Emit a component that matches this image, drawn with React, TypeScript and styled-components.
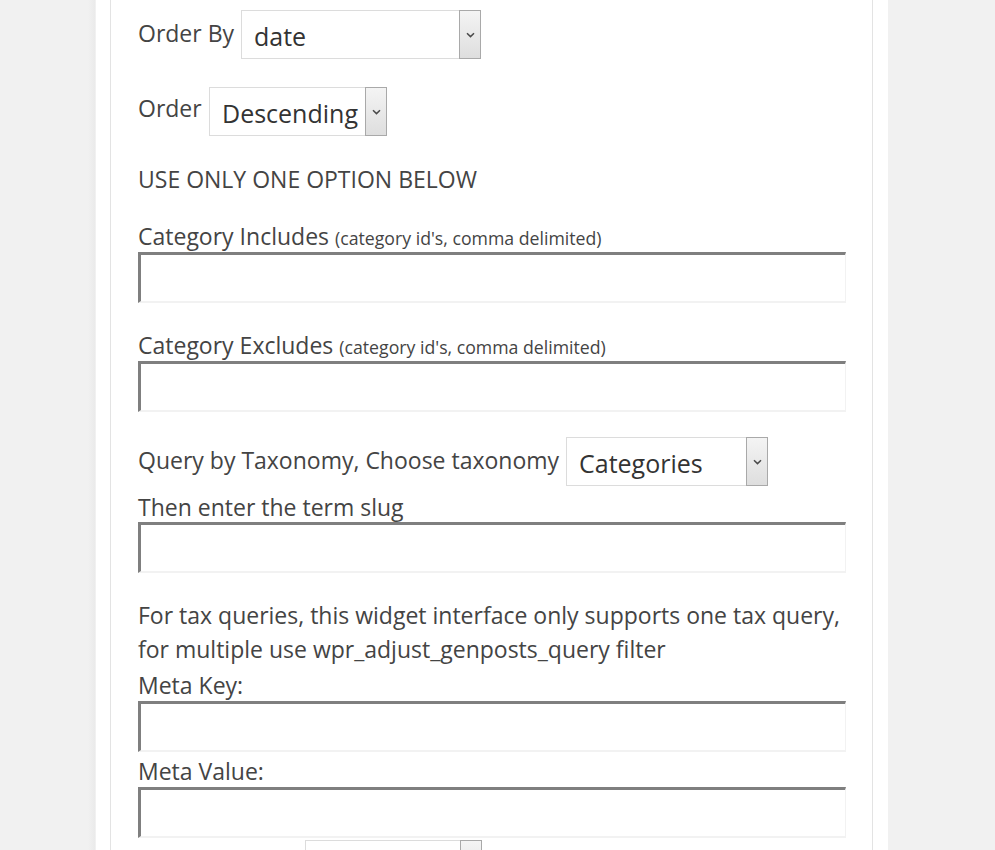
import React from "react";
import styled, { createGlobalStyle } from "styled-components";

const Global = createGlobalStyle`
  html, body { margin: 0; padding: 0; }
  body {
    background: #f1f1f1;
    font-family: "Open Sans", "Liberation Sans", sans-serif;
    color: #444;
    overflow: hidden;
  }
`;

const Page = styled.div`
  height: 850px;
  overflow: hidden;
  background: linear-gradient(to right, #f1f1f1 0, #f1f1f1 88px, #eaeaea 95px, #f1f1f1 95px);
  display: flex;
  align-items: flex-start;
`;

const Wrapper = styled.div`
  margin-left: 96px;
  width: 792px;
  min-height: 850px;
  background: #fff;
  padding: 0 15px 0 14px;
  box-sizing: border-box;
  display: flex;
`;

const Panel = styled.div`
  flex: 1;
  border-left: 1px solid #e3e3e3;
  border-right: 1px solid #e3e3e3;
  padding: 10px 26px 0 27px;
  display: flex;
  flex-direction: column;
  box-sizing: border-box;
  & > * { flex-shrink: 0; }
`;

const Row = styled.div<{ $mt?: number; $indent?: number }>`
  display: flex;
  align-items: flex-start;
  margin-top: ${(p) => p.$mt ?? 0}px;
  padding-left: ${(p) => p.$indent ?? 0}px;
`;

const Label = styled.div<{ $mt?: number; $w?: number }>`
  font-size: 23px;
  line-height: 34px;
  height: 34px;
  color: #444;
  margin-top: ${(p) => p.$mt ?? 0}px;
  ${(p) => (p.$w ? `width: ${p.$w}px;` : "")}
  white-space: nowrap;
`;

const Small = styled.span`
  font-size: 17.7px;
  line-height: 1;
`;

const Text = styled.div<{ $mt?: number }>`
  font-size: 23px;
  line-height: 34px;
  color: #444;
  margin-top: ${(p) => p.$mt ?? 0}px;
`;

const SelectBox = styled.div<{ $w: number }>`
  width: ${(p) => p.$w}px;
  height: 49px;
  box-sizing: border-box;
  border: 1px solid #dcdcdc;
  background: #fff;
  display: flex;
  align-items: stretch;
`;

const SelectValue = styled.div`
  flex: 1;
  font-size: 25px;
  line-height: 47px;
  padding: 2px 0 0 12px;
  box-sizing: border-box;
  color: #333;
  white-space: nowrap;
  overflow: hidden;
`;

const SelectButton = styled.div`
  width: 20px;
  border: 1px solid #a9a9a9;
  margin: -1px -1px -1px 0;
  background: linear-gradient(#f4f4f4, #dedede);
  display: flex;
  align-items: center;
  justify-content: center;
`;

const Input = styled.div<{ $mt?: number }>`
  height: 51px;
  box-sizing: border-box;
  border-style: solid;
  border-width: 3px 1px 2px 3px;
  border-color: #7f7f7f #f2f2f2 #f2f2f2 #7f7f7f;
  background: #fff;
  margin-top: ${(p) => p.$mt ?? 0}px;
`;

const Chevron = () => (
  <svg width="9" height="6" viewBox="0 0 9 6">
    <path d="M1 1.2 L4.5 4.6 L8 1.2" fill="none" stroke="#4a4a4a" strokeWidth="1.5" />
  </svg>
);

const Select = ({ w, value }: { w: number; value: string }) => (
  <SelectBox $w={w}>
    <SelectValue>{value}</SelectValue>
    <SelectButton>
      <Chevron />
    </SelectButton>
  </SelectBox>
);

export default function App() {
  return (
    <>
      <Global />
      <Page>
        <Wrapper>
          <Panel>
            <Row>
              <Label $mt={6} $w={103}>Order By</Label>
              <Select w={240} value="date" />
            </Row>
            <Row $mt={28}>
              <Label $mt={4} $w={71}>Order</Label>
              <Select w={178} value="Descending" />
            </Row>
            <Text $mt={26}>USE ONLY ONE OPTION BELOW</Text>
            <Label $mt={23}>
              Category Includes <Small>(category id's, comma delimited)</Small>
            </Label>
            <Input $mt={-1} />
            <Label $mt={25}>
              Category Excludes <Small>(category id's, comma delimited)</Small>
            </Label>
            <Input $mt={-1} />
            <Row $mt={25}>
              <Label $mt={6} $w={428}>Query by Taxonomy, Choose taxonomy</Label>
              <Select w={202} value="Categories" />
            </Row>
            <Label $mt={4}>Then enter the term slug</Label>
            <Input $mt={-2} />
            <Text $mt={25}>
              For tax queries, this widget interface only supports one tax query,
              <br />
              for multiple use wpr_adjust_genposts_query filter
            </Text>
            <Label $mt={2}>Meta Key:</Label>
            <Input $mt={-1} />
            <Label $mt={2}>Meta Value:</Label>
            <Input $mt={-1} />
            <Row $mt={2} $indent={167}>
              <Select w={177} value="" />
            </Row>
          </Panel>
        </Wrapper>
      </Page>
    </>
  );
}
